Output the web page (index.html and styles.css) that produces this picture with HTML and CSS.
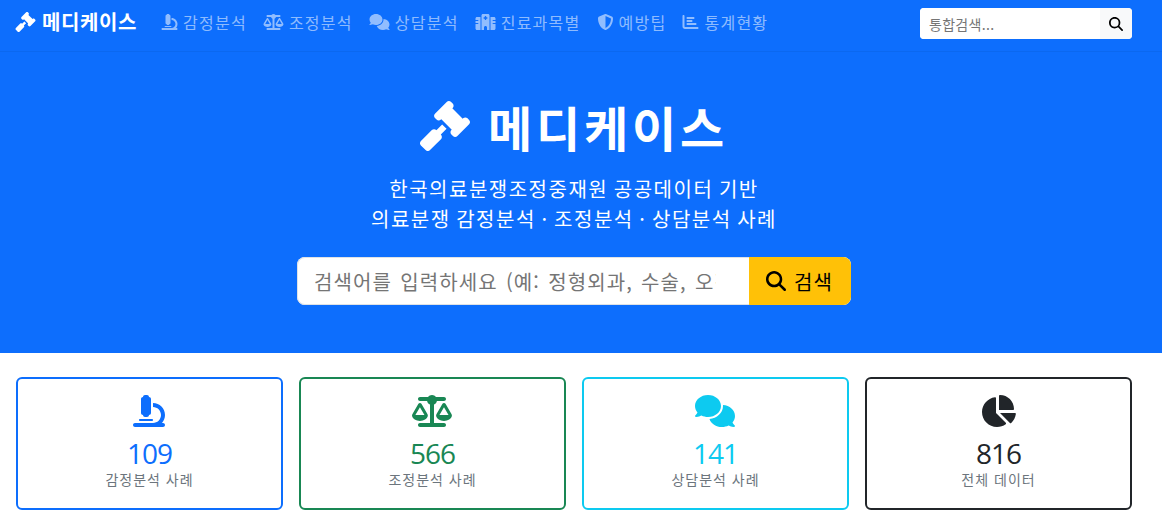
FILE: index.html
```html
<!DOCTYPE html>
<html lang="ko">
<head>
  <meta charset="utf-8">
  <title>메디케이스</title>
  <link rel="stylesheet" href="styles.css">
</head>
<body>
  <svg class="icon-defs" xmlns="http://www.w3.org/2000/svg">
    <symbol id="i-gavel" viewBox="0 0 512 512"><path d="M318.6 9.4c-12.5-12.5-32.8-12.5-45.3 0l-120 120c-12.5 12.5-12.5 32.8 0 45.3l16 16c12.5 12.5 32.8 12.5 45.3 0l4-4L325.4 293.4l-4 4c-12.5 12.5-12.5 32.8 0 45.3l16 16c12.5 12.5 32.8 12.5 45.3 0l120-120c12.5-12.5 12.5-32.8 0-45.3l-16-16c-12.5-12.5-32.8-12.5-45.3 0l-4 4L330.6 74.6l4-4c12.5-12.5 12.5-32.8 0-45.3l-16-16zm-152 288c-12.5-12.5-32.8-12.5-45.3 0l-112 112c-12.5 12.5-12.5 32.8 0 45.3l48 48c12.5 12.5 32.8 12.5 45.3 0l112-112c12.5-12.5 12.5-32.8 0-45.3l-1.4-1.4L272 285.3 226.7 240 168 298.7l-1.4-1.4z"/></symbol>
    <symbol id="i-microscope" viewBox="0 0 512 512"><path d="M160 32c0-17.7 14.3-32 32-32h32c17.7 0 32 14.3 32 32c17.7 0 32 14.3 32 32V288c0 17.7-14.3 32-32 32c0 17.7-14.3 32-32 32H192c-17.7 0-32-14.3-32-32c-17.7 0-32-14.3-32-32V64c0-17.7 14.3-32 32-32zM32 448H320c70.7 0 128-57.3 128-128s-57.3-128-128-128V128c106 0 192 86 192 192c0 49.2-18.5 94-48.9 128H480c17.7 0 32 14.3 32 32s-14.3 32-32 32H320 32c-17.7 0-32-14.3-32-32s14.3-32 32-32zm80-64H304c8.8 0 16 7.2 16 16s-7.2 16-16 16H112c-8.8 0-16-7.2-16-16s7.2-16 16-16z"/></symbol>
    <symbol id="i-scale" viewBox="0 0 640 512"><path d="M384 32H512c17.7 0 32 14.3 32 32s-14.3 32-32 32H398.4c-5.2 25.8-22.9 47.1-46.4 57.3V448H512c17.7 0 32 14.3 32 32s-14.3 32-32 32H320 128c-17.7 0-32-14.3-32-32s14.3-32 32-32H288V153.3c-23.5-10.3-41.2-31.6-46.4-57.3H128c-17.7 0-32-14.3-32-32s14.3-32 32-32H256c14.6-19.4 37.8-32 64-32s49.4 12.6 64 32zm55.6 288H584.4L512 195.8 439.6 320zM512 416c-62.9 0-115.2-34-126-78.9c-2.6-11 1-22.3 6.7-32.1l95.2-163.2c5-8.6 14.2-13.8 24.1-13.8s19.1 5.3 24.1 13.8l95.2 163.2c5.7 9.8 9.3 21.1 6.7 32.1C627.2 382 574.9 416 512 416zM126.8 195.8L54.4 320H199.3L126.8 195.8zM.9 337.1c-2.6-11 1-22.3 6.7-32.1l95.2-163.2c5-8.6 14.2-13.8 24.1-13.8s19.1 5.3 24.1 13.8l95.2 163.2c5.7 9.8 9.3 21.1 6.7 32.1C242 382 189.7 416 126.8 416S11.7 382 .9 337.1z"/></symbol>
    <symbol id="i-comments" viewBox="0 0 640 512"><path d="M208 352c114.9 0 208-78.8 208-176S322.9 0 208 0S0 78.8 0 176c0 38.6 14.7 74.3 39.6 103.4c-3.5 9.4-8.7 17.7-14.2 24.7c-4.8 6.2-9.7 11-13.3 14.3c-1.8 1.6-3.3 2.9-4.3 3.7c-.5 .4-.9 .7-1.1 .8l-.2 .2 0 0 0 0C1 327.2-1.4 334.4 .8 340.9S9.1 352 16 352c21.8 0 43.8-5.6 62.1-12.5c9.2-3.5 17.8-7.4 25.3-11.4C134.1 343.3 169.8 352 208 352zM448 176c0 112.3-99.1 196.9-216.5 207C255.8 457.7 336.4 512 432 512c38.2 0 73.9-8.7 104.7-23.9c7.5 4 16 7.9 25.2 11.4c18.3 6.9 40.3 12.5 62.1 12.5c6.9 0 13.1-4.5 15.2-11.1c2.1-6.6-.2-13.8-5.8-17.9l0 0 0 0-.2-.2c-.2-.2-.6-.4-1.1-.8c-1-.8-2.5-2-4.3-3.7c-3.6-3.3-8.5-8.1-13.3-14.3c-5.5-7-10.7-15.4-14.2-24.7c24.9-29 39.6-64.7 39.6-103.4c0-92.8-84.9-168.9-192.6-175.5c.4 5.1 .6 10.3 .6 15.5z"/></symbol>
    <symbol id="i-hospital" viewBox="0 0 640 512"><path d="M192 48c0-26.5 21.5-48 48-48H400c26.5 0 48 21.5 48 48V512H368V432c0-26.5-21.5-48-48-48s-48 21.5-48 48v80H192V48zM48 96H160V512H48c-26.5 0-48-21.5-48-48V320H80c8.8 0 16-7.2 16-16s-7.2-16-16-16H0V224H80c8.8 0 16-7.2 16-16s-7.2-16-16-16H0V144c0-26.5 21.5-48 48-48zm544 0c26.5 0 48 21.5 48 48v48H560c-8.8 0-16 7.2-16 16s7.2 16 16 16h80v64H560c-8.8 0-16 7.2-16 16s7.2 16 16 16h80V464c0 26.5-21.5 48-48 48H480V96H592zM312 64c-8.8 0-16 7.2-16 16v24H272c-8.8 0-16 7.2-16 16v16c0 8.8 7.2 16 16 16h24v24c0 8.8 7.2 16 16 16h16c8.8 0 16-7.2 16-16V152h24c8.8 0 16-7.2 16-16V120c0-8.8-7.2-16-16-16H344V80c0-8.8-7.2-16-16-16H312z"/></symbol>
    <symbol id="i-shield" viewBox="0 0 512 512"><path d="M256 0c4.6 0 9.2 1 13.4 2.9L457.7 82.8c22 9.3 38.4 31 38.3 57.2c-.5 99.2-41.3 280.7-213.6 363.2c-16.7 8-36.1 8-52.8 0C57.3 420.7 16.5 239.2 16 140c-.1-26.2 16.3-47.9 38.3-57.2L242.7 2.9C246.8 1 251.4 0 256 0zm0 66.8V444.8C394 378 431.1 230.1 432 141.4L256 66.8l0 0z"/></symbol>
    <symbol id="i-chart" viewBox="0 0 512 512"><path d="M32 32c17.7 0 32 14.3 32 32V400c0 8.8 7.2 16 16 16H480c17.7 0 32 14.3 32 32s-14.3 32-32 32H80c-44.2 0-80-35.8-80-80V64C0 46.3 14.3 32 32 32zm96 96c0-17.7 14.3-32 32-32l192 0c17.7 0 32 14.3 32 32s-14.3 32-32 32l-192 0c-17.7 0-32-14.3-32-32zm32 64H288c17.7 0 32 14.3 32 32s-14.3 32-32 32H160c-17.7 0-32-14.3-32-32s14.3-32 32-32zm0 96H416c17.7 0 32 14.3 32 32s-14.3 32-32 32H160c-17.7 0-32-14.3-32-32s14.3-32 32-32z"/></symbol>
    <symbol id="i-pie" viewBox="0 0 576 512"><path d="M304 240V16.6c0-9 7-16.6 16-16.6C443.7 0 544 100.3 544 224c0 9-7.6 16-16.6 16H304zM32 272C32 150.7 122.1 50.3 239 34.3c9.2-1.3 17 6.1 17 15.4V288L412.5 444.5c6.7 6.7 6.2 17.7-1.5 23.1C371.8 495.6 323.8 512 272 512C139.5 512 32 404.6 32 272zm526.4 16c9.3 0 16.6 7.8 15.4 17c-7.7 55.9-34.6 105.6-73.9 142.3c-6 5.6-15.4 5.2-21.2-.7L320 288H558.4z"/></symbol>
    <symbol id="i-search" viewBox="0 0 512 512"><path d="M416 208c0 45.9-14.9 88.3-40 122.7L502.6 457.4c12.5 12.5 12.5 32.8 0 45.3s-32.8 12.5-45.3 0L330.7 376c-34.4 25.2-76.8 40-122.7 40C93.1 416 0 322.9 0 208S93.1 0 208 0S416 93.1 416 208zM208 352a144 144 0 1 0 0-288 144 144 0 1 0 0 288z"/></symbol>
  </svg>

  <nav class="topbar">
    <a class="brand" href="#"><svg class="brand-icon"><use href="#i-gavel"/></svg>메디케이스</a>
    <ul class="menu">
      <li><a href="#"><svg class="menu-icon"><use href="#i-microscope"/></svg>감정분석</a></li>
      <li><a href="#"><svg class="menu-icon wide"><use href="#i-scale"/></svg>조정분석</a></li>
      <li><a href="#"><svg class="menu-icon wide"><use href="#i-comments"/></svg>상담분석</a></li>
      <li><a href="#"><svg class="menu-icon wide"><use href="#i-hospital"/></svg>진료과목별</a></li>
      <li><a href="#"><svg class="menu-icon"><use href="#i-shield"/></svg>예방팁</a></li>
      <li><a href="#"><svg class="menu-icon"><use href="#i-chart"/></svg>통계현황</a></li>
    </ul>
    <form class="nav-search">
      <input type="text" placeholder="통합검색...">
      <button type="button"><svg><use href="#i-search"/></svg></button>
    </form>
  </nav>

  <header class="hero">
    <h1><svg class="hero-icon"><use href="#i-gavel"/></svg>메디케이스</h1>
    <p>한국의료분쟁조정중재원 공공데이터 기반<br>의료분쟁 감정분석 · 조정분석 · 상담분석 사례</p>
    <form class="hero-search">
      <input type="text" placeholder="검색어를 입력하세요 (예: 정형외과, 수술, 오진...)">
      <button type="button"><svg><use href="#i-search"/></svg>검색</button>
    </form>
  </header>

  <main class="stats">
    <div class="stat stat-blue">
      <svg class="stat-icon"><use href="#i-microscope"/></svg>
      <strong>109</strong>
      <span>감정분석 사례</span>
    </div>
    <div class="stat stat-green">
      <svg class="stat-icon"><use href="#i-scale"/></svg>
      <strong>566</strong>
      <span>조정분석 사례</span>
    </div>
    <div class="stat stat-cyan">
      <svg class="stat-icon"><use href="#i-comments"/></svg>
      <strong>141</strong>
      <span>상담분석 사례</span>
    </div>
    <div class="stat stat-dark">
      <svg class="stat-icon"><use href="#i-pie"/></svg>
      <strong>816</strong>
      <span>전체 데이터</span>
    </div>
  </main>
</body>
</html>
```

FILE: styles.css
```css
* { box-sizing: border-box }
html, body { overflow: hidden }
body {
  margin: 0;
  height: 523px;
  font-family: "Open Sans", "Noto Sans CJK KR", sans-serif;
  font-size: 16px;
  color: #212529;
  background: #fff;
}
a { text-decoration: none; color: inherit }
svg { fill: currentColor; display: block }
.icon-defs { display: none }

/* top bar */
.topbar {
  display: flex;
  align-items: center;
  height: 52px;
  padding: 0 30px 4px 15px;
  background: #0d6efd;
  border-bottom: 1px solid #0b68f0;
}
.brand {
  display: flex;
  align-items: center;
  gap: 6px;
  margin-bottom: 3px;
  font-family: "Noto Sans CJK KR", sans-serif;
  font-size: 20px;
  font-weight: 700;
  line-height: 1;
  letter-spacing: .6px;
  color: #fff;
}
.brand-icon { width: 21px; height: 20px }
.menu {
  display: flex;
  gap: 16px;
  margin: 0 0 3px 24px;
  padding: 0;
  list-style: none;
  flex: 1;
}
.menu a {
  display: flex;
  align-items: center;
  gap: 5px;
  font-family: "Noto Sans CJK KR", sans-serif;
  font-size: 16px;
  line-height: 24px;
  letter-spacing: 1.25px;
  color: rgba(255, 255, 255, .55);
}
.menu-icon { width: 17px; height: 16px }
.menu-icon.wide { width: 21px }
.nav-search {
  display: flex;
  width: 212px;
  height: 31px;
  border-radius: 4px;
  background: #fff;
  overflow: hidden;
}
.nav-search input {
  flex: 1;
  min-width: 0;
  border: 0;
  padding: 0 9px;
  font: 14px "Noto Sans CJK KR", sans-serif;
  letter-spacing: .3px;
  outline: 0;
}
.nav-search button {
  width: 32px;
  border: 0;
  padding: 0;
  background: #f8f9fa;
  color: #000;
  display: flex;
  align-items: center;
  justify-content: center;
}
.nav-search svg { width: 14px; height: 14px }

/* hero */
.hero {
  height: 301px;
  padding: 45px 14px 0 0;
  background: #0d6efd;
  color: #fff;
  text-align: center;
}
.hero h1 {
  display: flex;
  justify-content: center;
  align-items: center;
  gap: 18px;
  margin: 0 0 19px;
  font-family: "Noto Sans CJK KR", sans-serif;
  font-size: 48px;
  font-weight: 700;
  line-height: 58px;
  letter-spacing: 3.8px;
}
.hero-icon { width: 50px; height: 50px }
.hero p {
  margin: 0 0 23px;
  font-family: "Noto Sans CJK KR", sans-serif;
  font-size: 20px;
  line-height: 30px;
  letter-spacing: 1.5px;
  word-spacing: -1.5px;
}
.hero-search {
  display: flex;
  width: 554px;
  height: 48px;
  margin: 0 auto;
  border-radius: 8px;
  overflow: hidden;
  background: #fff;
  box-shadow: 0 0 0 1px #dee2e6 inset;
}
.hero-search input {
  flex: 1;
  min-width: 0;
  border: 0;
  background: transparent;
  padding: 0 33px 0 17px;
  font: 20px "Noto Sans CJK KR", sans-serif;
  letter-spacing: 1.1px;
  word-spacing: 1.5px;
  outline: 0;
}
.hero-search button {
  display: flex;
  align-items: center;
  gap: 8px;
  width: 102px;
  padding: 0 17px;
  border: 0;
  background: #ffc107;
  color: #000;
  font: 20px "Noto Sans CJK KR", sans-serif;
  letter-spacing: 1.2px;
}
.hero-search svg { width: 20px; height: 20px }

/* stat cards */
.stats {
  display: grid;
  grid-template-columns: repeat(4, 267px);
  gap: 16px;
  padding: 24px 0 0 16px;
}
.stat {
  display: flex;
  flex-direction: column;
  align-items: center;
  height: 133px;
  padding-top: 16px;
  border: 2px solid;
  border-radius: 6px;
  background: #fff;
}
.stat-icon { width: 42px; height: 32px; margin-right: 2px }
.stat strong {
  margin-top: 10px;
  font-size: 28px;
  font-weight: 400;
  line-height: 32px;
  letter-spacing: -1px;
}
.stat span {
  font-family: "Noto Sans CJK KR", sans-serif;
  font-size: 14px;
  line-height: 21px;
  letter-spacing: 1px;
  color: #6c757d;
}
.stat-blue { border-color: #0d6efd; color: #0d6efd }
.stat-green { border-color: #198754; color: #198754 }
.stat-cyan { border-color: #0dcaf0; color: #0dcaf0 }
.stat-dark { border-color: #212529; color: #212529 }
```
